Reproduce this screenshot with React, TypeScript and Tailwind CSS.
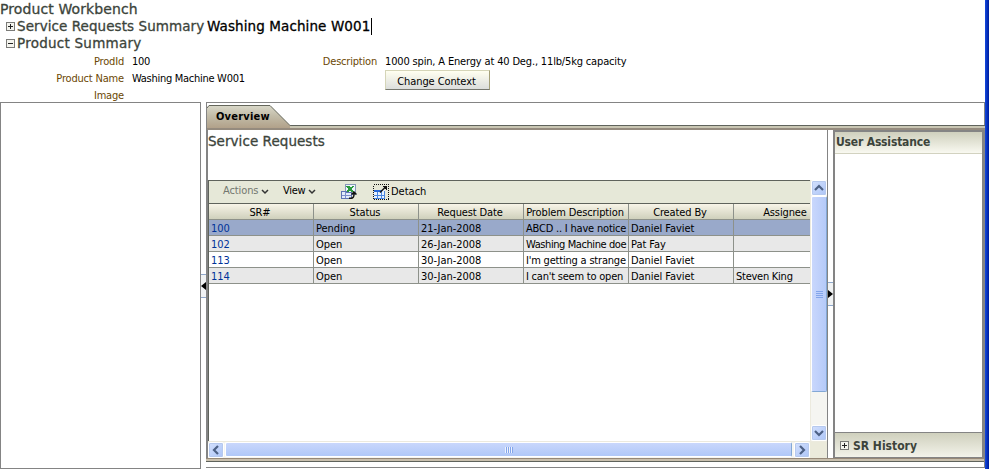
import React from "react";

const LINE = "border-[#848484]";
const HEADING = "font-['DejaVu_Sans',sans-serif] [-webkit-text-stroke:0.3px_currentColor]";

function Toggle({ open }: { open?: boolean }) {
  return (
    <svg width="9" height="9" viewBox="0 0 9 9" shapeRendering="crispEdges" className="shrink-0">
      <rect x="0.5" y="0.5" width="8" height="8" fill="#f4f4ee" stroke="#7b7b78" />
      <path d={open ? "M2 4.5h5" : "M2 4.5h5M4.5 2v5"} stroke="#222" />
    </svg>
  );
}

function Chevron() {
  return (
    <svg width="8" height="6" viewBox="0 0 8 6" className="-mt-px ml-[2px]">
      <path d="M1 1l3 3 3-3" fill="none" stroke="#333" strokeWidth="1.5" />
    </svg>
  );
}

function ScrollButton({ d }: { d: string }) {
  return (
    <div className="flex h-[16px] w-[16px] shrink-0 items-center justify-center rounded-[2px] border border-white bg-linear-to-br from-[#d3e0fd] to-[#adc5f7] shadow-[0_0_0_1px_#b6c9ee_inset]">
      <svg width="10" height="10" viewBox="0 0 10 10">
        <path d={d} fill="none" stroke="#4d6185" strokeWidth="2.2" />
      </svg>
    </div>
  );
}

function ExportIcon() {
  return (
    <svg width="16" height="16" viewBox="0 0 16 16" shapeRendering="crispEdges" className="ml-[25px]">
      <path d="M4.5 0.5h10v10h-10z" fill="#eef4fc" stroke="#8797b8" />
      <path d="M5 2h3l1.500 1.500L11 2h2l-2.500 3L13 8h-3L8.500 6.500 7 8H5l2.500-3z" fill="#2c9a3e" />
      <path d="M0.5 7.5h5v1h5v6h-10z" fill="#e4ecfb" stroke="#6074b4" />
      <path d="M1 11.5h9M4.500 8v6" stroke="#7f90ca" />
      <path d="M8 14.200h2q3 0 3-4V8.500M10.500 10.500L13 8l2.500 2.500" fill="none" stroke="#111" strokeWidth="1.500" shapeRendering="auto" />
    </svg>
  );
}

function DetachIcon() {
  return (
    <svg width="16" height="16" viewBox="0 0 16 16" shapeRendering="crispEdges" className="ml-[16px]">
      <rect x="0.5" y="0.5" width="15" height="15" fill="none" stroke="#111" strokeDasharray="1 1" />
      <path d="M1 6h11v9H1z" fill="#e6f2ff" />
      <path d="M1 6h8v2H1z" fill="#2869d8" />
      <path d="M1 11.5h11M4.5 8v7M8.5 8v7M11.5 7v8M1 14.5h11" stroke="#4a86e0" />
      <path d="M7 8.500l5-5" stroke="#111" strokeWidth="1.500" shapeRendering="auto" />
      <path d="M9 2h5v5z" fill="#111" />
    </svg>
  );
}

const columns = ["SR#", "Status", "Request Date", "Problem Description", "Created By", "Assignee"];

const rows = [
  { bg: "bg-[#99a9ca]", tight: "tracking-[-0.2px]", cells: ["100", "Pending", "21-Jan-2008", "ABCD .. I have notice", "Daniel Faviet", ""] },
  { bg: "bg-[#e8e8e8]", tight: "tracking-[-0.42px]", cells: ["102", "Open", "26-Jan-2008", "Washing Machine doe", "Pat Fay", ""] },
  { bg: "bg-white", tight: "tracking-[-0.2px]", cells: ["113", "Open", "30-Jan-2008", "I'm getting a strange", "Daniel Faviet", ""] },
  { bg: "bg-[#e8e8e8]", tight: "tracking-[-0.22px]", cells: ["114", "Open", "30-Jan-2008", "I can't seem to open", "Daniel Faviet", "Steven King"] },
];

function cellTracking(i: number, tight: string) {
  if (i === 3) return tight;
  if (i === 5) return "tracking-[-0.25px]";
  return "tracking-[-0.05px]";
}

function Grid() {
  return (
    <div className="h-[261px] w-[602px] overflow-hidden border-t border-l border-[#5f635c]">
      <div className="flex h-[22px] items-center bg-[#e6e8d8] pl-[14px]">
        <span className="-mt-[2px] w-[36px] tracking-[-0.1px] text-[#73776f]">Actions</span>
        <Chevron />
        <span className="-mt-[2px] ml-[14px] w-[23px] tracking-[-0.3px]">View</span>
        <Chevron />
        <ExportIcon />
        <DetachIcon />
        <span className="ml-[2px]">Detach</span>
      </div>
      <div className="flex h-[17px] w-[630px] border-y border-t-[#5f635c] border-b-[#8d918a] bg-linear-to-b from-[#f8f5e8] to-[#cfd0bc]">
        {columns.map((name) => (
          <div key={name} className="w-[105px] shrink-0 border-r border-[#8d918a] pr-[2px] text-center leading-[17px] tracking-[-0.12px]">
            {name}
          </div>
        ))}
      </div>
      {rows.map((r) => (
        <div key={r.cells[0]} className={`flex h-[16px] w-[630px] border-b border-[#8d918a] ${r.bg}`}>
          {r.cells.map((c, i) => (
            <div key={i} className={`w-[105px] shrink-0 border-r border-[#8d918a] pl-[2px] leading-[17px] ${cellTracking(i, r.tight)} ${i === 0 ? "text-[#003399]" : ""}`}>
              {c}
            </div>
          ))}
        </div>
      ))}
    </div>
  );
}

function Header() {
  return (
    <div className="h-[102px]">
      <h1 className={`h-[18px] text-[14px] leading-[18px] tracking-[0.1px] text-[#3c443b] ${HEADING}`}>Product Workbench</h1>
      <div className={`flex h-[17px] items-center pl-[6px] text-[13.5px] text-[#3c443b] ${HEADING}`}>
        <Toggle />
        <span className="ml-[2px] w-[190px] tracking-[0.07px]">Service Requests Summary</span>
        <span className="border-r border-black pr-px leading-[17px] tracking-[0.1px] text-black">Washing Machine W001</span>
      </div>
      <div className={`flex h-[17px] items-center pl-[6px] text-[13.5px] text-[#3c443b] ${HEADING}`}>
        <Toggle open />
        <span className="ml-[2px] tracking-[0.25px]">Product Summary</span>
      </div>
      <div className="flex leading-[17px]">
        <div className="w-[124px] pt-px text-right tracking-[-0.18px] text-[#6b4704]">
          <div>ProdId</div>
          <div>Product Name</div>
          <div>Image</div>
        </div>
        <div className="w-[191px] pt-px pl-[8px] tracking-[-0.28px]">
          <div>100</div>
          <div>Washing Machine W001</div>
        </div>
        <div className="w-[62px] pt-px text-right tracking-[-0.2px] text-[#6b4704]">Description</div>
        <div className="pt-px pl-[8px]">
          <div className="tracking-[-0.16px]">1000 spin, A Energy at 40 Deg., 11lb/5kg capacity</div>
          <button className="block h-[20px] w-[105px] border border-t-[#d5d5b8] border-r-[#a4a078] border-b-[#76786f] border-l-[#d5d5b8] bg-linear-to-b from-[#fffff0] to-[#dcdedc] pt-[2px] pr-[2px] leading-[18px] tracking-[-0.1px]">
            Change Context
          </button>
        </div>
      </div>
    </div>
  );
}

function TabBar() {
  return (
    <div className="h-[27px] pt-[2px]">
      <div className="relative h-[25px]">
        <svg width="778" height="25" viewBox="0 0 778 25" className="block">
          <defs>
            <linearGradient id="tab" x1="0" y1="0" x2="0" y2="1">
              <stop offset="0" stopColor="#d9d8c9" />
              <stop offset="0.45" stopColor="#c3bda9" />
              <stop offset="1" stopColor="#b1a18a" />
            </linearGradient>
          </defs>
          <path d="M0 20h778v5H0z" fill="#c9c6b3" />
          <path d="M82 20.5H778" stroke="#5f635c" />
          <path d="M0 23h778v2H0z" fill="#958b7e" />
          <path d="M0 23V3L2 0.5H63L83 20.5V23z" fill="url(#tab)" />
          <path d="M0 3L2 0.5H63L83 20.5" fill="none" stroke="#65665b" />
        </svg>
        <span className="absolute top-[3px] left-[9px] font-bold leading-[17px] tracking-[0.2px]">Overview</span>
      </div>
    </div>
  );
}

function VerticalBar() {
  return (
    <div className="flex h-[261px] w-[17px] flex-col items-center border-l border-[#eceade] bg-[#f5f5f1]">
      <ScrollButton d="M1 7l4-4 4 4" />
      <div className="flex h-[196px] w-[16px] flex-col items-center justify-center gap-px rounded-[2px] border border-white border-r-[#83a8d5] border-b-[#83a8d5] bg-linear-to-r from-[#c9d7fc] to-[#b5caf9]">
        <i className="h-px w-[7px] bg-[#83a5ea]" />
        <i className="h-px w-[7px] bg-[#83a5ea]" />
        <i className="h-px w-[7px] bg-[#83a5ea]" />
        <i className="h-px w-[7px] bg-[#83a5ea]" />
      </div>
      <div className="flex-1" />
      <ScrollButton d="M1 3l4 4 4-4" />
    </div>
  );
}

function HorizontalBar() {
  return (
    <div className="flex h-[17px] items-center border-t border-[#eceade] bg-[#f5f5f1] pb-px">
      <ScrollButton d="M7 1L3 5l4 4" />
      <div className="mx-px flex h-[15px] w-[567px] items-center justify-center rounded-[2px] border border-white border-r-[#83a8d5] bg-linear-to-b from-[#c9d7fc] to-[#b0c8f8]">
        <i className="h-[6px] w-px bg-[#eef3fe]" />
        <i className="h-[6px] w-px bg-[#83a5ea]" />
        <i className="h-[6px] w-px bg-[#eef3fe]" />
        <i className="h-[6px] w-px bg-[#83a5ea]" />
        <i className="h-[6px] w-px bg-[#eef3fe]" />
        <i className="h-[6px] w-px bg-[#83a5ea]" />
        <i className="h-[6px] w-px bg-[#eef3fe]" />
        <i className="h-[6px] w-px bg-[#83a5ea]" />
      </div>
      <div className="flex-1" />
      <ScrollButton d="M3 1l4 4-4 4" />
      <div className="h-[16px] w-[17px] bg-[#ebeadb]" />
    </div>
  );
}

function Splitter({ d }: { d: string }) {
  return (
    <div className="flex h-[24px] w-[5px] items-center justify-center border-y border-[#8fa8cc] bg-[#f1f3f4]">
      <svg width="5" height="8" viewBox="0 0 5 8">
        <path d={d} fill="#000" />
      </svg>
    </div>
  );
}

export default function App() {
  return (
    <div className="flex h-[469px] w-[989px] overflow-hidden bg-white font-['DejaVu_Sans_Condensed','DejaVu_Sans',sans-serif] text-[11px] whitespace-nowrap text-black">
      <div className="flex w-[985px] flex-col">
        <Header />
        <div className="flex h-[367px]">
          <div className={`w-[201px] border ${LINE}`} />
          <div className="w-[5px] pt-[172px]">
            <Splitter d="M5 0v8L0 4z" />
          </div>
          <div className={`h-[366px] w-[779px] border-y border-r ${LINE}`}>
            <div className={`border-l ${LINE}`}>
              <TabBar />
            </div>
            <div className="flex h-[328px]">
              <div className="w-[622px] border-r border-b border-l-2 border-[#848484]">
                <h2 className={`h-[50px] pt-[2px] text-[13.5px] leading-[18px] tracking-[0.05px] text-[#3c443b] ${HEADING}`}>Service Requests</h2>
                <div className="flex">
                  <Grid />
                  <VerticalBar />
                </div>
                <HorizontalBar />
              </div>
              <div className="w-[5px] pt-[152px]">
                <Splitter d="M0 0v8l5-4z" />
              </div>
              <div className="flex w-[151px] flex-col border-2 border-b border-[#848484] font-bold text-[#3c443b]">
                <div className="h-[22px] border-b border-[#d2d2c0] bg-linear-to-b from-[#cfd0bd] to-[#f9f9f1] pl-px text-[12px] leading-[20px] tracking-[-0.18px]">User Assistance</div>
                <div className="flex-1" />
                <div className="flex h-[25px] items-center border-t border-[#848484] bg-linear-to-b from-[#cfd0bd] to-[#f3f3ea] pl-[5px] text-[12px]">
                  <Toggle />
                  <span className="mt-px ml-[4px]">SR History</span>
                </div>
              </div>
            </div>
            <div className="h-[4px] border-t border-b border-t-[#968877] border-b-[#5f635c] bg-[#c9c0ae]" />
          </div>
        </div>
      </div>
      <div className="w-[4px] bg-linear-to-r from-[#1549df] to-[#001b9c]" />
    </div>
  );
}
